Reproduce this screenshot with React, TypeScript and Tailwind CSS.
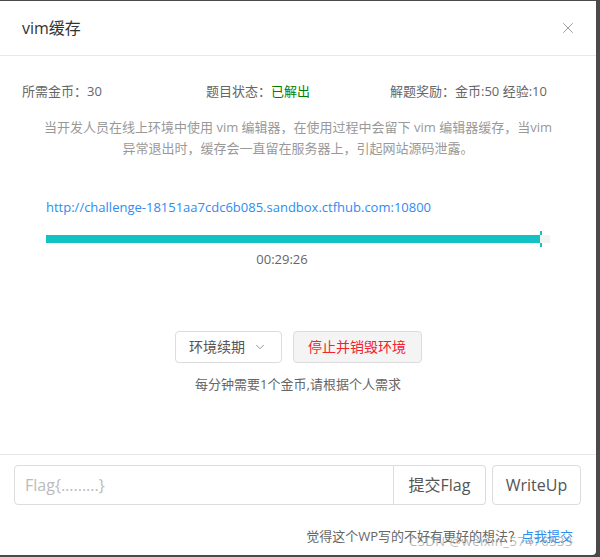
import { X, ChevronDown } from 'lucide-react';

const font = { fontFamily: '"Open Sans", "Noto Sans CJK SC", sans-serif' };

function InfoRow() {
  return (
    <div className="flex items-center px-[22px] text-[13px] text-[#666]">
      <div className="w-[184px]">所需金币：30</div>
      <div className="w-[184px]">
        题目状态：<span className="text-[#008000]">已解出</span>
      </div>
      <div className="flex-1">解题奖励：金币:50 经验:10</div>
    </div>
  );
}

function Progress() {
  return (
    <div className="px-[46px]">
      <a className="block text-[13px] text-[#2d8cf0]">http://challenge-18151aa7cdc6b085.sandbox.ctfhub.com:10800</a>
      <div className="relative mt-[18px] flex h-[8px] w-[504px] bg-[#f3f3f3]">
        <div className="h-full w-[494px] bg-[#13c2c2]" />
        <div className="absolute left-[494px] top-[-4px] h-[4px] w-[2px] bg-[#13c2c2]" />
        <div className="absolute left-[494px] top-[8px] h-[4px] w-[2px] bg-[#13c2c2]" />
      </div>
      <div className="mt-[7px] w-[472px] text-center text-[13px] text-[#666]">00:29:26</div>
    </div>
  );
}

export default function App() {
  return (
    <div className="h-[557px] w-[600px] overflow-hidden bg-[#4a4a4a] pt-px" style={font}>
      <div className="relative flex h-[554px] w-[596px] flex-col rounded-br-[4px] bg-white">
        <div className="flex h-[55px] items-center justify-between border-b border-[#e8e8e8] pl-[22px] pr-[19px]">
          <div className="text-[16px] text-[#333]">vim缓存</div>
          <X className="h-[18px] w-[18px] text-[#999]" strokeWidth={1.3} />
        </div>
        <div className="pt-[26px]">
          <InfoRow />
        </div>
        <div className="mx-auto mt-[15px] w-[560px] text-center text-[13px] leading-[21px] text-[#999]">
          当开发人员在线上环境中使用 vim 编辑器，在使用过程中会留下 vim 编辑器缓存，当vim
          <br />
          异常退出时，缓存会一直留在服务器上，引起网站源码泄露。
        </div>
        <div className="mt-[39px]">
          <Progress />
        </div>
        <div className="mt-[61px] flex justify-center gap-[11px]">
          <button className="flex h-[32px] w-[107px] items-center justify-center gap-[8px] rounded-[4px] border border-[#dcdcdc] bg-white text-[14px] text-[#555]">
            环境续期
            <ChevronDown className="h-[14px] w-[14px] text-[#888]" strokeWidth={1.5} />
          </button>
          <button className="h-[32px] w-[129px] rounded-[4px] border border-[#dcdcdc] bg-[#f4f4f4] text-[14px] text-[#f5222d]">
            停止并销毁环境
          </button>
        </div>
        <div className="mt-[12px] text-center text-[13px] text-[#666]">每分钟需要1个金币,请根据个人需求</div>
        <div className="mt-auto border-t border-[#e8e8e8] px-[14px] pb-[9px] pt-[10px]">
          <div className="flex h-[40px] items-stretch">
            <input
              placeholder="Flag{.........}"
              className="w-[380px] rounded-l-[4px] border border-[#dcdcdc] px-[10px] text-[16px] text-[#555] outline-none placeholder:text-[#bbb]"
            />
            <button className="w-[92px] rounded-r-[4px] border border-l-0 border-[#dcdcdc] text-[16px] text-[#555]">
              提交Flag
            </button>
            <button className="ml-[6px] w-[89px] rounded-[4px] border border-[#dcdcdc] text-[16px] text-[#555]">
              WriteUp
            </button>
          </div>
          <div className="relative mt-[21px] h-[20px] pr-[9px] text-right text-[13px] leading-[20px] text-[#666]">
            觉得这个WP写的不好有更好的想法？<span className="text-[#2d8cf0]">点我提交</span>
            <span className="absolute right-[9px] top-[5px] text-[13px] tracking-[0.5px] text-[#999]/70">CSDN @weixin_57476533</span>
          </div>
        </div>
      </div>
    </div>
  );
}
